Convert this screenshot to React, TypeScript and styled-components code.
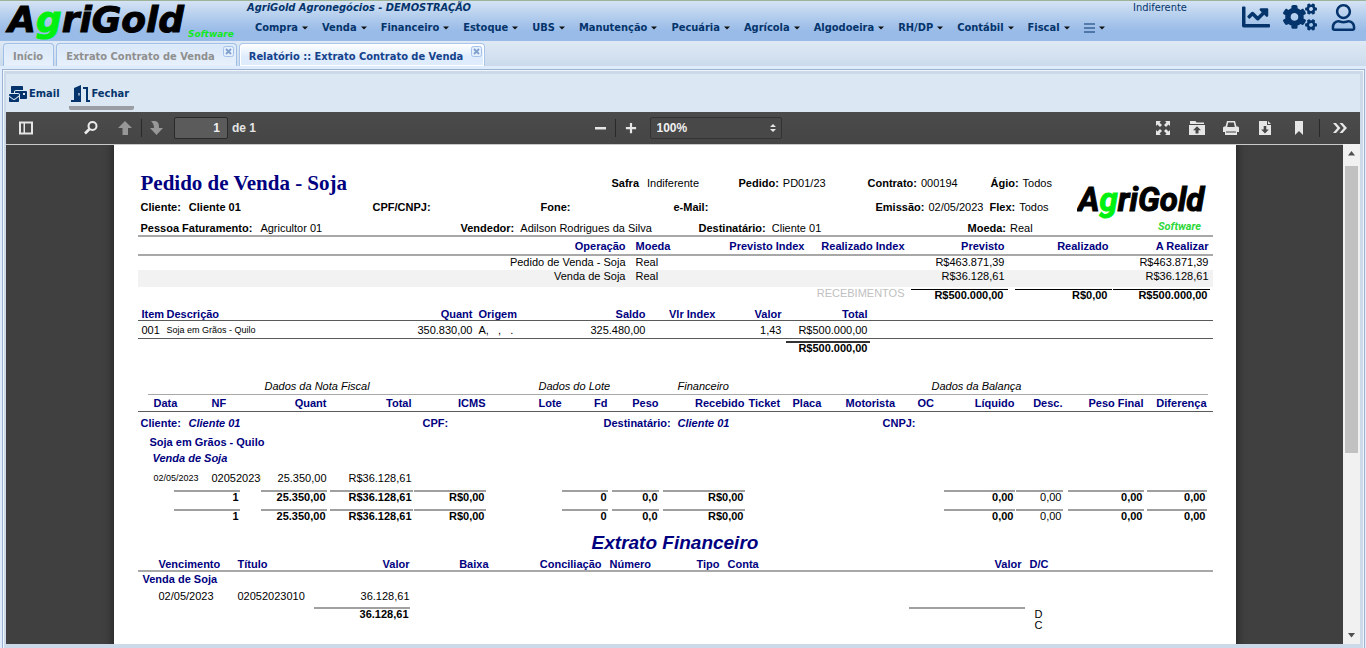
import React from "react";
import styled, { createGlobalStyle, css } from "styled-components";
import { FaChartLine, FaCogs, FaMailBulk, FaRegUser } from "react-icons/fa";

const uiFont = `Tahoma, "DejaVu Sans Condensed", "DejaVu Sans", sans-serif`;
const reportFont = `"Liberation Sans", Arial, sans-serif`;
const navy = "#000080";
const ink = "#04346b";

const GlobalStyle = createGlobalStyle`
  *, *::before, *::after { box-sizing: border-box; }
  body { margin: 0; background: #deecfd; overflow: hidden; }
  button, input, select { font: inherit; color: inherit; margin: 0; }
`;

const Shell = styled.div`
  display: flex;
  flex-direction: column;
  height: 100vh;
  font: 11px/14px ${uiFont};
  color: ${ink};
`;

/* ---------- top header ---------- */

const Header = styled.header`
  display: flex;
  height: 41px;
  flex: none;
  border-top: 1px solid #9db39a;
  background: linear-gradient(#d5e3f4, #aecaec 45%, #99bbe8 75%, #99bbe8);
`;

const BrandLink = styled.a`
  display: block;
  width: 247px;
  flex: none;
`;

const HeaderMain = styled.div`
  flex: 1;
  min-width: 0;
`;

const Company = styled.h1`
  margin: 0;
  font: italic bold 11px/14px ${uiFont};
`;

const Nav = styled.nav`
  display: flex;
  gap: 14px;
  padding: 6px 0 0 8px;
`;

const MenuButton = styled.button`
  display: flex;
  align-items: center;
  gap: 4px;
  height: 14px;
  padding: 0;
  border: 0;
  background: none;
  font-weight: bold;
  white-space: nowrap;
`;

const Season = styled.span`
  width: 109px;
  flex: none;
`;

const HeaderTools = styled.div`
  display: flex;
  gap: 13px;
  padding-right: 9px;
  flex: none;
`;

const IconButton = styled.button`
  display: flex;
  align-items: center;
  height: 32px;
  padding: 0;
  border: 0;
  background: none;
`;

/* ---------- tabs ---------- */

const TabBar = styled.div`
  display: flex;
  align-items: flex-end;
  gap: 2px;
  height: 25px;
  flex: none;
  padding-left: 3px;
  background: linear-gradient(#dfe9f5, #cbdbec);
`;

const Tab = styled.div<{ $active?: boolean }>`
  display: flex;
  height: 23px;
  padding: 0 2px 0 9px;
  border: 1px solid ${(p) => (p.$active ? "#a9c5ea" : "#9fbfe8")};
  border-bottom: 0;
  border-radius: 4px 4px 0 0;
  color: ${(p) => (p.$active ? "#15428b" : "#8f8f8f")};
  background: ${(p) => (p.$active ? "linear-gradient(#ffffff, #deecfd 60%)" : "linear-gradient(#d9e7f8, #e8f1fc)")};
  box-shadow: inset 0 0 0 1px ${(p) => (p.$active ? "#fff" : "#e3eefb")};
`;

const TabLabel = styled.button`
  padding: 3px 8px 0 0;
  border: 0;
  background: none;
  font-weight: bold;
  line-height: 16px;
  white-space: nowrap;
`;

const TabClose = styled.button`
  display: block;
  width: 11px;
  height: 11px;
  margin-top: 2px;
  padding: 0;
  border: 0;
  background: none;
`;

/* ---------- panel frame ---------- */

const Frame = styled.main`
  display: flex;
  flex-direction: column;
  flex: 1;
  min-height: 0;
  margin: 3px 1px 0 2px;
  padding: 1px 1px 0;
  border: 1px solid #9db3d0;
  border-bottom: 0;
  background: #f1f6fd;
`;

const Panel = styled.section`
  display: flex;
  flex-direction: column;
  flex: 1;
  min-height: 0;
  border: solid #ccd9e8;
  border-width: 3px 3px 4px 2px;
  background: #dbe7f3;
`;

const ActionBar = styled.div`
  display: flex;
  gap: 9px;
  height: 38px;
  flex: none;
  padding: 4px 3px 0;
`;

const ActionButton = styled.button<{ $current?: boolean }>`
  display: flex;
  align-items: center;
  gap: 2px;
  height: 32px;
  padding: ${(p) => (p.$current ? "4px 5px 0 2px" : "4px 0 0")};
  border: 0;
  border-bottom: 4px solid ${(p) => (p.$current ? "#9a9da3" : "transparent")};
  border-radius: 0 0 2px 2px;
  background: none;
  font-weight: bold;
`;

/* ---------- document viewer ---------- */

const ViewerBar = styled.div`
  display: flex;
  align-items: center;
  justify-content: space-between;
  height: 32px;
  flex: none;
  padding: 0 12px;
  background: linear-gradient(#4b4b4b, #454545);
  color: #e4e4e4;
  font-weight: bold;
  font-family: ${reportFont};
`;

const BarGroup = styled.div<{ $grow?: boolean; $end?: boolean }>`
  display: flex;
  align-items: center;
  ${(p) => p.$grow && "flex: 1;"}
  ${(p) => p.$end && "justify-content: flex-end;"}
`;

const BarButton = styled.button<{ $width?: number; $dim?: boolean }>`
  display: flex;
  align-items: center;
  justify-content: center;
  width: ${(p) => p.$width ?? 34}px;
  height: 24px;
  padding: 0;
  border: 0;
  background: none;
  opacity: ${(p) => (p.$dim ? 0.5 : 1)};
`;

const Divider = styled.span`
  width: 1px;
  height: 18px;
  background: #292929;
`;

const Spacer = styled.span<{ $width: number }>`
  width: ${(p) => p.$width}px;
`;

const PageInput = styled.input`
  width: 54px;
  height: 22px;
  margin: 0 4px;
  padding: 0 7px;
  border: 1px solid #2a2a2a;
  border-radius: 2px;
  background: #5b5b5b;
  color: #f0f0f0;
  text-align: right;
`;

const PageLabel = styled.label`
  display: flex;
  align-items: center;
  white-space: nowrap;
  font-size: 12px;
`;

const ZoomBox = styled.label`
  position: relative;
  display: block;
  margin-left: 4px;
  svg { position: absolute; right: 6px; top: 7px; }
`;

const ZoomSelect = styled.select`
  display: block;
  appearance: none;
  width: 132px;
  height: 22px;
  padding: 0 6px;
  border: 1px solid #333;
  border-radius: 2px;
  background: #484848;
  color: #f0f0f0;
  font-size: 12px;
`;

const Viewer = styled.div`
  display: flex;
  flex: 1;
  min-height: 0;
  background: #404040;
`;

const Canvas = styled.div`
  flex: 1;
  min-width: 0;
  overflow: hidden;
  border-top: 1px solid #c9c9c9;
`;

const Scrollbar = styled.div`
  display: flex;
  flex-direction: column;
  align-items: center;
  justify-content: space-between;
  width: 17px;
  flex: none;
  padding: 7px 0 6px;
  background: #f1f1f1;
`;

const Thumb = styled.div`
  width: 13px;
  height: 59%;
  margin: 10px 0 auto;
  background: #c1c1c1;
`;

/* ---------- report sheet ---------- */

const Sheet = styled.article`
  width: 1122px;
  min-height: 100%;
  margin: 0 auto;
  padding: 26px 23px 40px 24px;
  background: #fff;
  box-shadow: 0 0 6px 3px #2c2c2c;
  color: #000;
  font: 11px/12px ${reportFont};
`;

const SheetHead = styled.div`
  display: flex;
  height: 64px;
`;

const HeadFields = styled.div`
  flex: 1;
  padding-left: 3px;
`;

const FieldRow = styled.div<{ $cols: string; $height: number }>`
  display: grid;
  grid-template-columns: ${(p) => p.$cols};
  align-items: center;
  height: ${(p) => p.$height}px;
  white-space: nowrap;
`;

const FieldBox = styled.div<{ $gap?: number }>`
  display: flex;
  gap: ${(p) => p.$gap ?? 6}px;
`;

const ReportTitle = styled.h2`
  margin: 0;
  font: bold 21px/24px "Liberation Serif", "Times New Roman", serif;
  color: ${navy};
`;

const Section = styled.h3`
  margin: 4px 0 2px;
  text-align: center;
  font: italic bold 19px/24px ${reportFont};
  color: ${navy};
`;

const Table = styled.table<{ $pad: number }>`
  table-layout: fixed;
  width: 100%;
  border-collapse: separate;
  border-spacing: 0;
  th, td {
    padding: 0 ${(p) => p.$pad - 1}px 0 ${(p) => p.$pad + 1}px;
    text-align: left;
    white-space: pre;
  }
  th { color: ${navy}; }
`;

type Rule = "none" | "thick" | "thin";

const ruleOf = (side: string, rule?: Rule) =>
  rule === "thick"
    ? css`border-${side}: 2px solid #a8a8a8;`
    : rule === "thin"
    ? css`border-${side}: 1px solid #5a5a5a;`
    : "";

const Row = styled.tr<{ $height: number; $top?: Rule; $bottom?: Rule; $shade?: boolean; $valign?: string }>`
  height: ${(p) => p.$height}px;
  background: ${(p) => (p.$shade ? "#f2f2f2" : "none")};
  && > th, && > td {
    vertical-align: ${(p) => p.$valign ?? "middle"};
    ${(p) => ruleOf("top", p.$top)}
    ${(p) => ruleOf("bottom", p.$bottom)}
  }
`;

const Cell = styled.td<{ $right?: boolean; $clip?: boolean; $small?: boolean; $muted?: boolean }>`
  && {
    text-align: ${(p) => (p.$right ? "right" : "left")};
    ${(p) => p.$clip && "overflow: hidden;"}
    ${(p) => p.$small && "font-size: 9px;"}
    ${(p) => p.$muted && "color: #c0c0c0;"}
  }
`;

const HeadCell = styled.th<{ $right?: boolean }>`
  && { text-align: ${(p) => (p.$right ? "right" : "left")}; }
`;

const SumCell = styled.td<{ $inset: string }>`
  &&& { padding: ${(p) => p.$inset}; vertical-align: top; line-height: 11px; }
`;

const Sum = styled.div<{ $tone?: string; $weight?: number; $end?: number; $line?: number }>`
  min-height: 13px;
  padding-right: ${(p) => p.$end ?? 1}px;
  border-top: ${(p) => p.$line ?? 2}px solid ${(p) => p.$tone ?? "#a0a0a0"};
  font-weight: ${(p) => p.$weight ?? 700};
  text-align: right;
`;

const PartyStrip = styled.div`
  display: grid;
  grid-template-columns: 48px 234px 181px 74px 205px 1fr;
  color: ${navy};
  font-weight: bold;
`;

const GroupHeads = styled.div`
  display: grid;
  grid-template-columns: 117px 274px 139px 254px 1fr;
  margin: 25px 5px 0 10px;
  height: 15px;
  border-bottom: 1px solid #a8a8a8;
  font-style: italic;
`;

const GroupName = styled.div<{ $indent: number; $italic?: boolean }>`
  padding-left: ${(p) => p.$indent}px;
  color: ${navy};
  font-weight: bold;
  font-style: ${(p) => (p.$italic ? "italic" : "normal")};
`;

/* ---------- drawings ---------- */

const BigLogo = () => (
  <svg width="246" height="40" viewBox="0 0 246 40" role="img" aria-label="AgriGold Software">
    <g fontFamily="DejaVu Sans, sans-serif" fontStyle="italic" fontWeight="bold">
      <text x="8" y="31" fontSize="36" fill="#000" stroke="#000" strokeWidth="1">
        A<tspan fill="#00f010" stroke="#00f010">g</tspan>riGold
      </text>
      <text x="188" y="36" fontSize="9" fill="#10e820">Software</text>
    </g>
  </svg>
);

const SheetLogo = () => (
  <svg width="136" height="62" viewBox="0 0 136 62" role="img" aria-label="AgriGold Software">
    <g fontFamily="Roboto, sans-serif" fontStyle="italic" fontWeight="bold">
      <text x="1" y="40" fontSize="33" fill="#000" stroke="#000" strokeWidth="1">
        A<tspan fill="#00f010" stroke="#00f010">g</tspan>riGold
      </text>
      <text x="81" y="59" fontSize="11" fill="#2fd83a">Software</text>
    </g>
  </svg>
);

const Caret = () => (
  <svg width="6" height="4" viewBox="0 0 6 4"><path d="M0 0.500h6L3 3.500z" fill="#111" /></svg>
);

const Bars = () => (
  <svg width="11" height="10" viewBox="0 0 11 10"><path d="M0 1h11M0 5h11M0 9h11" stroke={ink} /></svg>
);

const CloseMark = () => (
  <svg width="11" height="11" viewBox="0 0 11 11">
    <rect x="0.500" y="0.500" width="10" height="10" rx="2" fill="#e6f0fc" stroke="#a4c1ea" />
    <path d="M3 3l5 5M8 3l-5 5" stroke="#7f9fcc" strokeWidth="1.800" />
  </svg>
);

const DoorIcon = () => (
  <svg width="19" height="18" viewBox="0 0 19 18" fill={ink}>
    <path d="M3 3l7-3v17H0v-2h3zM7.400 8v2.600h1.200V8z" fillRule="evenodd" />
    <path d="M12 2h5v13h2v2h-4V4h-3z" />
  </svg>
);

const glyphs: Record<string, React.ReactNode> = {
  sidebar: <path d="M1 1.500h14v13H1zM3 3.500v9h2.500v-9zM7 3.500v9h6v-9z" fillRule="evenodd" />,
  find: (
    <g fill="none" stroke="#ececec">
      <circle cx="9.500" cy="6" r="4" strokeWidth="2" />
      <path d="M6.500 9L2 13.500" strokeWidth="2.600" />
    </g>
  ),
  up: <path d="M8 1l7 7h-4v7H5.500V8H1z" />,
  down: <path d="M3 1h3c4 0 5 2 5 7h4l-6.500 7L2 8h4c0-3-1-5-3-7z" />,
  minus: <path d="M3 7h11v2.500H3z" />,
  plus: <path d="M6.900 3h2.200v4h4v2.200h-4v4H6.900v-4h-4V7h4z" />,
  full: (
    <path d="M1 1h5L4.500 2.500 7 5 5 7 2.500 4.500 1 6zM15 1v5l-1.500-1.500L11 7 9 5l2.500-2.500L10 1zM1 15v-5l1.500 1.500L5 9l2 2-2.500 2.500L6 15zM15 15h-5l1.500-1.500L9 11l2-2 2.500 2.500L15 10z" />
  ),
  open: <path d="M1 1h5.500l1 1.500H15V4H1zM0 5h16v10H0zM8 6.200L4 10.200h2.500V13.500h3V10.200H12z" fillRule="evenodd" />,
  print: <path d="M4 1h8l1.500 5.500H15l1 1V12h-2v3H2v-3H0V7.500l1-1h1.500zM5.200 2.500L4.200 7h7.600l-1-4.500zM3 11.500V12.500h10V11.500z" fillRule="evenodd" />,
  save: <path d="M2 1h8v4h4v10H2zM11 1l3 3h-3zM6.700 6v3.500H4.200L8 13.500l3.800-4H9.300V6z" fillRule="evenodd" />,
  mark: <path d="M4 1h8v14l-4-4-4 4z" />,
  more: <path d="M1 3h3l4.500 5L4 13H1l4.300-5zM7.500 3h3L15 8l-4.500 5h-3l4.300-5z" />,
};

const Glyph = ({ name }: { name: string }) => (
  <svg width="16" height="16" viewBox="0 0 16 16" fill="#e6e6e6">{glyphs[name]}</svg>
);

const Arrow = ({ down }: { down?: boolean }) => (
  <svg width="7" height="5" viewBox="0 0 7 5"><path d={down ? "M0 0h7L3.500 4.500z" : "M0 4.500h7L3.500 0z"} fill="#505050" /></svg>
);

/* ---------- pieces ---------- */

const Field = ({ label, value, gap, strong }: { label: string; value?: string; gap?: number; strong?: boolean }) => (
  <FieldBox $gap={gap}>
    <b>{label}</b>
    {value && (strong ? <b>{value}</b> : <span>{value}</span>)}
  </FieldBox>
);

const Columns = ({ widths }: { widths: number[] }) => (
  <colgroup>{widths.map((w, i) => <col key={i} width={w} />)}</colgroup>
);

type Head = [string, boolean?];
const Heads = ({ items }: { items: Head[] }) => (
  <>{items.map(([text, right], i) => <HeadCell key={i} scope="col" $right={right}>{text}</HeadCell>)}</>
);

const menus = ["Compra", "Venda", "Financeiro", "Estoque", "UBS", "Manutenção", "Pecuária", "Agrícola", "Algodoeira", "RH/DP", "Contábil", "Fiscal"];

const Operations = () => (
  <Table $pad={5}>
    <Columns widths={[492, 79, 100, 100, 100, 104, 100]} />
    <thead>
      <Row $height={21} $top="thick" $bottom="thick">
        <Heads items={[["Operação", true], ["Moeda"], ["Previsto Index", true], ["Realizado Index", true], ["Previsto", true], ["Realizado", true], ["A Realizar", true]]} />
      </Row>
    </thead>
    <tbody>
      {[["Pedido de Venda - Soja", "R$463.871,39"], ["Venda de Soja", "R$36.128,61"]].map(([name, amount], i) => (
        <Row key={name} $height={i ? 17 : 14} $shade={i === 1} $valign="top">
          <Cell $right>{name}</Cell>
          <Cell>Real</Cell>
          <Cell /><Cell />
          <Cell $right>{amount}</Cell>
          <Cell />
          <Cell $right>{amount}</Cell>
        </Row>
      ))}
      <Row $height={20} $valign="top">
        <td colSpan={2} />
        <Cell colSpan={2} $right $muted>RECEBIMENTOS</Cell>
        <SumCell $inset="2px 1px 0 2px"><Sum $tone="#000" $line={1} $end={4}>R$500.000,00</Sum></SumCell>
        <SumCell $inset="2px 1px 0 6px"><Sum $tone="#000" $line={1} $end={4}>R$0,00</Sum></SumCell>
        <SumCell $inset="2px 3px 0 0"><Sum $tone="#000" $line={1} $end={2}>R$500.000,00</Sum></SumCell>
      </Row>
    </tbody>
  </Table>
);

const Items = () => (
  <Table $pad={3}>
    <Columns widths={[25, 227, 85, 80, 93, 70, 66, 86, 343]} />
    <thead>
      <Row $height={14} $bottom="thin">
        <Heads items={[["Item"], ["Descrição"], ["Quant", true], ["Origem"], ["Saldo", true], ["Vlr Index", true], ["Valor", true], ["Total", true], [""]]} />
      </Row>
    </thead>
    <tbody>
      <Row $height={18} $bottom="thin">
        <Cell>001</Cell>
        <Cell $small>Soja em Grãos - Quilo</Cell>
        <Cell $right>350.830,00</Cell>
        <Cell>{"A,   ,   ."}</Cell>
        <Cell $right>325.480,00</Cell>
        <Cell />
        <Cell $right>1,43</Cell>
        <Cell $right>R$500.000,00</Cell>
        <Cell />
      </Row>
      <Row $height={16} $valign="top">
        <td colSpan={7} />
        <SumCell $inset="2px 0 0 2px"><Sum $tone="#333" $end={2}>R$500.000,00</Sum></SumCell>
        <td />
      </Row>
    </tbody>
  </Table>
);

const InvoiceTotals = () => (
  <Row $height={19} $valign="top">
    <SumCell colSpan={3} $inset="1px 21px 0 36px"><Sum>1</Sum></SumCell>
    <SumCell $inset="1px 1px 0 0"><Sum>25.350,00</Sum></SumCell>
    <SumCell $inset="1px 0 0 2px"><Sum>R$36.128,61</Sum></SumCell>
    <SumCell $inset="1px 1px 0 1px"><Sum>R$0,00</Sum></SumCell>
    <td colSpan={2} />
    <SumCell $inset="1px 1px 0 1px"><Sum>0</Sum></SumCell>
    <SumCell $inset="1px 1px 0 3px"><Sum>0,0</Sum></SumCell>
    <SumCell $inset="1px 1px 0 3px"><Sum>R$0,00</Sum></SumCell>
    <td colSpan={4} />
    <SumCell $inset="1px 1px 0 1px"><Sum>0,00</Sum></SumCell>
    <SumCell $inset="1px 1px 0 0"><Sum $weight={400}>0,00</Sum></SumCell>
    <SumCell $inset="1px 1px 0 4px"><Sum>0,00</Sum></SumCell>
    <SumCell $inset="1px 1px 0 2px"><Sum>0,00</Sum></SumCell>
    <td />
  </Row>
);

const Invoices = () => (
  <>
    <GroupHeads>
      <span />
      <span>Dados da Nota Fiscal</span>
      <span>Dados do Lote</span>
      <span>Financeiro</span>
      <span>Dados da Balança</span>
    </GroupHeads>
    <Table $pad={2}>
      <Columns widths={[13, 58, 52, 67, 85, 74, 49, 25, 48, 51, 86, 44, 53, 72, 28, 73, 48, 81, 63, 5]} />
      <thead>
        <Row $height={17} $bottom="thin">
          <Heads items={[[""], ["Data"], ["NF"], ["Quant", true], ["Total", true], ["ICMS", true], [""], ["Lote"], ["Fd", true], ["Peso", true], ["Recebido", true], ["Ticket"], ["Placa"], ["Motorista"], ["OC"], ["Líquido", true], ["Desc.", true], ["Peso Final", true], ["Diferença", true], [""]]} />
        </Row>
      </thead>
      <tbody>
        <Row $height={22}>
          <td colSpan={20}>
            <PartyStrip>
              <span>Cliente:</span><em>Cliente 01</em><span>CPF:</span>
              <span>Destinatário:</span><em>Cliente 01</em><span>CNPJ:</span>
            </PartyStrip>
          </td>
        </Row>
        <Row $height={16}><td colSpan={20}><GroupName $indent={9}>Soja em Grãos - Quilo</GroupName></td></Row>
        <Row $height={16}><td colSpan={20}><GroupName $indent={12} $italic>Venda de Soja</GroupName></td></Row>
        <Row $height={23}>
          <td />
          <Cell $small>02/05/2023</Cell>
          <Cell $clip>02052023010</Cell>
          <Cell $right>25.350,00</Cell>
          <Cell $right>R$36.128,61</Cell>
          <td colSpan={15} />
        </Row>
        <InvoiceTotals />
        <InvoiceTotals />
      </tbody>
    </Table>
  </>
);

const Statement = () => (
  <Table $pad={4}>
    <Columns widths={[16, 79, 79, 101, 79, 113, 75, 43, 182, 120, 188]} />
    <thead>
      <Row $height={15} $bottom="thick">
        <Heads items={[[""], ["Vencimento"], ["Título"], ["Valor", true], ["Baixa", true], ["Conciliação", true], ["Número"], ["Tipo", true], ["Conta"], ["Valor", true], ["D/C"]]} />
      </Row>
    </thead>
    <tbody>
      <Row $height={14}><td colSpan={11}><GroupName $indent={0}>Venda de Soja</GroupName></td></Row>
      <Row $height={20}>
        <td />
        <Cell>02/05/2023</Cell>
        <Cell>02052023010</Cell>
        <Cell $right>36.128,61</Cell>
        <td colSpan={7} />
      </Row>
      <Row $height={22} $valign="top">
        <td colSpan={3} />
        <SumCell $inset="1px 3px 0 2px"><Sum>36.128,61</Sum></SumCell>
        <td colSpan={5} />
        <SumCell $inset="1px 0 0 4px"><Sum /></SumCell>
        <SumCell $inset="3px 10px">{"D\nC"}</SumCell>
      </Row>
    </tbody>
  </Table>
);

const Report = () => (
  <Sheet>
    <SheetHead>
      <HeadFields>
        <FieldRow $height={24} $cols="471px 127px 129px 123px 1fr">
          <ReportTitle>Pedido de Venda - Soja</ReportTitle>
          <Field label="Safra" value="Indiferente" gap={8} />
          <Field label="Pedido:" value="PD01/23" gap={4} />
          <Field label="Contrato:" value="000194" gap={4} />
          <Field label="Ágio:" value="Todos" gap={4} />
        </FieldRow>
        <FieldRow $height={24} $cols="232px 168px 133px 202px 114px 1fr">
          <Field label="Cliente:" value="Cliente 01" gap={8} strong />
          <Field label="CPF/CNPJ:" />
          <Field label="Fone:" />
          <Field label="e-Mail:" />
          <Field label="Emissão:" value="02/05/2023" gap={4} />
          <Field label="Flex:" value="Todos" gap={4} />
        </FieldRow>
        <FieldRow $height={18} $cols="320px 238px 269px 1fr">
          <Field label="Pessoa Faturamento:" value="Agricultor 01" gap={8} />
          <Field label="Vendedor:" value="Adilson Rodrigues da Silva" />
          <Field label="Destinatário:" value="Cliente 01" />
          <Field label="Moeda:" value="Real" gap={4} />
        </FieldRow>
      </HeadFields>
      <SheetLogo />
    </SheetHead>
    <Operations />
    <Items />
    <Invoices />
    <Section>Extrato Financeiro</Section>
    <Statement />
  </Sheet>
);

export default function App() {
  return (
    <Shell>
      <GlobalStyle />
      <Header>
        <BrandLink href="#" aria-label="AgriGold Software"><BigLogo /></BrandLink>
        <HeaderMain>
          <Company>AgriGold Agronegócios - DEMOSTRAÇÃO</Company>
          <Nav>
            {menus.map((m) => <MenuButton key={m}>{m}<Caret /></MenuButton>)}
            <MenuButton aria-label="Mais"><Bars /><Caret /></MenuButton>
          </Nav>
        </HeaderMain>
        <Season>Indiferente</Season>
        <HeaderTools>
          <IconButton aria-label="Gráficos"><FaChartLine size={28} /></IconButton>
          <IconButton aria-label="Configurações"><FaCogs size={34} /></IconButton>
          <IconButton aria-label="Usuário"><FaRegUser size={27} /></IconButton>
        </HeaderTools>
      </Header>
      <TabBar>
        <Tab><TabLabel>Início</TabLabel></Tab>
        <Tab>
          <TabLabel>Extrato Contrato de Venda</TabLabel>
          <TabClose aria-label="Fechar aba"><CloseMark /></TabClose>
        </Tab>
        <Tab $active>
          <TabLabel>Relatório :: Extrato Contrato de Venda</TabLabel>
          <TabClose aria-label="Fechar aba"><CloseMark /></TabClose>
        </Tab>
      </TabBar>
      <Frame>
        <Panel>
          <ActionBar>
            <ActionButton><FaMailBulk size={18} />Email</ActionButton>
            <ActionButton $current><DoorIcon />Fechar</ActionButton>
          </ActionBar>
          <ViewerBar>
            <BarGroup $grow>
              <BarButton $width={16} aria-label="Painel lateral"><Glyph name="sidebar" /></BarButton>
              <Spacer $width={49} />
              <BarButton $width={16} aria-label="Localizar"><Glyph name="find" /></BarButton>
              <Spacer $width={10} />
              <BarButton $width={32} $dim aria-label="Anterior"><Glyph name="up" /></BarButton>
              <Divider />
              <BarButton $width={28} $dim aria-label="Próxima"><Glyph name="down" /></BarButton>
              <PageLabel><PageInput defaultValue="1" />de 1</PageLabel>
            </BarGroup>
            <BarGroup>
              <BarButton $width={30} aria-label="Reduzir"><Glyph name="minus" /></BarButton>
              <Divider />
              <BarButton $width={30} aria-label="Ampliar"><Glyph name="plus" /></BarButton>
              <ZoomBox>
                <ZoomSelect aria-label="Zoom"><option>100%</option></ZoomSelect>
                <svg width="6" height="8" viewBox="0 0 6 8"><path d="M0 3h6L3 0zM0 5h6L3 8z" fill="#e6e6e6" /></svg>
              </ZoomBox>
            </BarGroup>
            <BarGroup $grow $end>
              <BarButton aria-label="Tela cheia"><Glyph name="full" /></BarButton>
              <BarButton aria-label="Abrir"><Glyph name="open" /></BarButton>
              <BarButton aria-label="Imprimir"><Glyph name="print" /></BarButton>
              <BarButton aria-label="Salvar"><Glyph name="save" /></BarButton>
              <BarButton aria-label="Marcador"><Glyph name="mark" /></BarButton>
              <Spacer $width={3} />
              <Divider />
              <Spacer $width={12} />
              <BarButton $width={16} aria-label="Ferramentas"><Glyph name="more" /></BarButton>
            </BarGroup>
          </ViewerBar>
          <Viewer>
            <Canvas><Report /></Canvas>
            <Scrollbar><Arrow /><Thumb /><Arrow down /></Scrollbar>
          </Viewer>
        </Panel>
      </Frame>
    </Shell>
  );
}
